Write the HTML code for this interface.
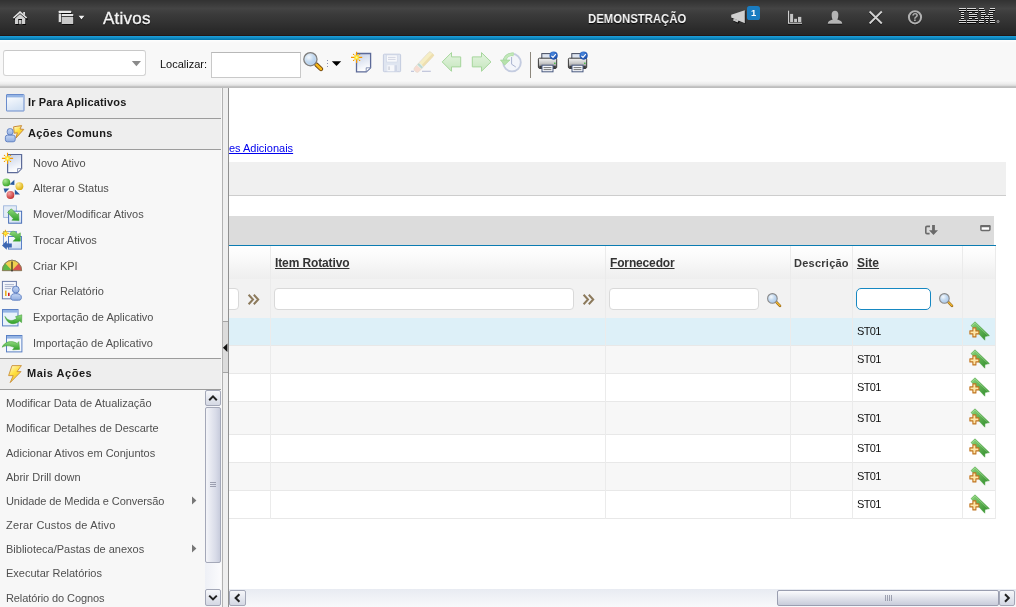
<!DOCTYPE html>
<html><head><meta charset="utf-8">
<style>
*{box-sizing:border-box}
html,body{margin:0;padding:0;width:1016px;height:607px;overflow:hidden;background:#fff;font-family:"Liberation Sans",sans-serif;position:relative}
.a{position:absolute}
svg.a{overflow:visible;will-change:transform}
.t{position:absolute;white-space:nowrap;line-height:1}
.t,.sitem,.mitem,.bh,.hh,.st{will-change:transform}
#hdr{left:0;top:0;width:1016px;height:36px;background:linear-gradient(#323232 0px,#3a3a3a 4px,#444 8.5px,#3b3b3b 14px,#333 22px,#2a2a2a 30px,#262626 35px)}
#hdrline{left:0;top:35px;width:1016px;height:1px;background:#221818}
#blue{left:0;top:36px;width:1016px;height:4px;background:linear-gradient(#1ea0da,#0e86bd 60%,#0272a6)}
#tb{left:0;top:40px;width:1016px;height:48px;background:linear-gradient(#fefefe 0px,#f8f8f8 3px,#f8f8f8 41px,#f3f3f3 42px,#ececec 44px,#dcdcdc 45.5px,#c4c4c4 46.5px,#bababa 48px)}
#side{left:0;top:88px;width:222px;height:519px;background:#f7f7f7}
.band{position:absolute;left:0;width:221px;background:#eeeeee;border-bottom:1px solid #9c9c9c}
.sitem{position:absolute;left:33px;font-size:11px;color:#505050;white-space:nowrap;line-height:1}
.mitem{position:absolute;left:6px;font-size:11px;color:#505050;white-space:nowrap;line-height:1}
.bh{position:absolute;left:28px;font-size:11px;font-weight:bold;color:#1a1a1a;white-space:nowrap;line-height:1;letter-spacing:0.15px}
#strip{left:222px;top:88px;width:7px;height:519px;background:#efefef;border-left:1px solid #b2b2b2;border-right:1px solid #909090}
#main{left:229px;top:88px;width:787px;height:519px;overflow:hidden}
#mi{position:absolute;left:-229px;top:-88px;width:1016px;height:607px}
.col{position:absolute;width:1px;background:#ebebeb}
.row{position:absolute;left:229px;width:767px}
.st{position:absolute;left:856.6px;font-size:11px;color:#111;line-height:1;letter-spacing:-0.65px;margin-top:-1px}
.fin{position:absolute;height:22px;background:#fff;border:1px solid #d9d9d9;border-radius:4px}
.hh{position:absolute;font-size:12px;font-weight:bold;color:#333;text-decoration:underline;line-height:1;white-space:nowrap}
</style></head><body>
<!-- header -->
<div id="hdr" class="a"></div>
<div id="hdrline" class="a"></div>
<div id="blue" class="a"></div>
<!-- home -->
<svg class="a" style="left:8px;top:6px" width="24" height="24" viewBox="0 0 24 24">
 <g transform="translate(0.6,0.7)" fill="#000" opacity="0.9">
  <path d="M5 12.2 L12 5.6 L19.2 12.2 L19.2 13 L17.6 13 L12 8 L6.6 13 L5 13Z"/>
  <path d="M7 13 L12 8.6 L17.3 13 V18.2 H14 V13.6 H10.2 V18.2 H7Z"/>
 </g>
 <path d="M15.2 6 H17 V9.4 L15.2 7.8Z" fill="#d8d8d8"/>
 <path d="M4.9 11.6 L12 5 L19.2 11.6 L18.1 12.6 L12 7.2 L6 12.6Z" fill="#e4e4e4"/>
 <path d="M7 12.4 L12 8 L17.3 12.4 V17.9 H14 V13 H10.2 V17.9 H7Z" fill="#cfcfcf"/>
 <path d="M10.8 14 H13.4 V17.9 H10.8Z" fill="#c8c8c8"/>
</svg>
<!-- apps -->
<svg class="a" style="left:54px;top:6px" width="36" height="24" viewBox="0 0 36 24">
 <g fill="#000" opacity="0.85" transform="translate(0.5,0.8)">
  <rect x="4.7" y="4.7" width="12.5" height="2.4" rx="0.6"/>
  <rect x="4.7" y="7" width="2.4" height="9.3"/>
  <rect x="7.7" y="7.9" width="11.6" height="10.1" rx="0.6"/>
 </g>
 <rect x="4.7" y="4.7" width="12.5" height="2.4" rx="0.6" fill="#e8e8e8"/>
 <rect x="4.7" y="7.6" width="2.4" height="8.6" fill="#dedede"/>
 <rect x="7.7" y="7.9" width="11.6" height="2.4" rx="0.6" fill="#e6e6e6"/>
 <rect x="7.7" y="10.9" width="11.6" height="7.1" rx="0.5" fill="#c9c9c9"/>
 <path d="M24.6 9.8 H30.4 L27.5 13.6Z" fill="#000" opacity="0.8" transform="translate(0,0.6)"/>
 <path d="M24.6 9.8 H30.4 L27.5 13.4Z" fill="#f0f0f0"/>
</svg>
<div class="t" style="left:103px;top:10px;font-size:17px;color:#f4f4f4;letter-spacing:0.25px;text-shadow:0 1px 1px #000;-webkit-text-stroke:0.35px #f4f4f4">Ativos</div>
<div class="t" style="left:588px;top:12.2px;font-size:13px;font-weight:bold;color:#f6f6f6;text-shadow:0 1px 1px #000;transform:scaleX(0.872);transform-origin:0 0">DEMONSTRAÇÃO</div>
<!-- megaphone -->
<svg class="a" style="left:726px;top:2px" width="40" height="28" viewBox="0 0 40 28">
 <g transform="translate(0.6,0.8)" fill="#000" opacity="0.8">
  <path d="M5.2 12.8 L18.8 8.2 V21.3 L13.2 18.4 L11.6 21 L7 18.7 L8 16.4 L5.2 15.6Z"/>
 </g>
 <path d="M5.2 12.8 L18.8 8.2 V21.3 L5.2 15.6Z" fill="#cfcfcf"/>
 <path d="M7.8 16.4 L12.9 18.2 L11.6 20.6 L7 18.6Z" fill="#c4c4c4"/>
 <rect x="21" y="4" width="13" height="14" rx="2.6" fill="#1a7cc0"/>
 <text x="27.6" y="14" text-anchor="middle" font-family="Liberation Sans" font-weight="bold" font-size="9.4" fill="#fff">1</text>
</svg>
<!-- chart -->
<svg class="a" style="left:782px;top:4px" width="24" height="24" viewBox="0 0 24 24">
 <g fill="#000" opacity="0.8" transform="translate(0,0.8)">
  <rect x="6" y="6.7" width="1.1" height="12.3"/><rect x="6" y="18.7" width="14" height="1.2"/>
 </g>
 <rect x="6" y="6.7" width="1.1" height="12.3" fill="#cfcfcf"/>
 <rect x="6" y="18.7" width="14" height="1.1" fill="#cfcfcf"/>
 <rect x="8.1" y="9.9" width="3" height="8.2" fill="#c4c4c4"/>
 <rect x="12.1" y="14.8" width="2.9" height="3.3" fill="#c4c4c4"/>
 <rect x="16" y="12.9" width="3.3" height="5.2" fill="#c4c4c4"/>
</svg>
<!-- person -->
<svg class="a" style="left:826px;top:8px" width="18" height="18" viewBox="0 0 18 18">
 <g fill="#000" opacity="0.7" transform="translate(0,0.8)">
  <path d="M1.8 15.8 C1.8 13.2 4 12.4 6.6 11.6 C5.9 10.4 5.6 9 5.6 6.6 C5.6 4.2 7 2.7 9 2.7 C11 2.7 12.4 4.2 12.4 6.6 C12.4 9 12.1 10.4 11.4 11.6 C14 12.4 16.2 13.2 16.2 15.8Z"/>
 </g>
 <path d="M1.8 15.8 C1.8 13.2 4 12.4 6.6 11.6 C5.9 10.4 5.6 9 5.6 6.6 C5.6 4.2 7 2.7 9 2.7 C11 2.7 12.4 4.2 12.4 6.6 C12.4 9 12.1 10.4 11.4 11.6 C14 12.4 16.2 13.2 16.2 15.8Z" fill="#b4b4b4"/>
</svg>
<!-- X -->
<svg class="a" style="left:866px;top:8px" width="20" height="20" viewBox="0 0 20 20">
 <g stroke="#000" stroke-width="2" opacity="0.8" transform="translate(0,0.8)"><path d="M3.6 3.5 L15.8 15.5 M15.8 3.5 L3.6 15.5"/></g>
 <g stroke="#d2d2d2" stroke-width="1.9"><path d="M3.6 3.5 L15.8 15.5 M15.8 3.5 L3.6 15.5"/></g>
</svg>
<!-- help -->
<svg class="a" style="left:905px;top:8px" width="20" height="20" viewBox="0 0 20 20">
 <circle cx="10" cy="9.3" r="6.1" fill="none" stroke="#000" stroke-width="2" opacity="0.6" transform="translate(0,0.6)"/>
 <circle cx="10" cy="9.3" r="6.1" fill="none" stroke="#b0b0b0" stroke-width="2"/>
 <text x="10" y="13.2" text-anchor="middle" font-family="Liberation Sans" font-weight="bold" font-size="11" fill="#b0b0b0">?</text>
</svg>
<!-- IBM -->
<svg class="a" style="left:0;top:0" width="1016" height="30" viewBox="0 0 1016 30">
 <g fill="#000" opacity="0.85"><rect x="959" y="9" width="7" height="1"/><rect x="967" y="9" width="9" height="1"/><rect x="979" y="9" width="5" height="1"/><rect x="990" y="9" width="5" height="1"/><rect x="959" y="11" width="7" height="1"/><rect x="967" y="11" width="11" height="1"/><rect x="979" y="11" width="6" height="1"/><rect x="989" y="11" width="6" height="1"/><rect x="961" y="13" width="3" height="1"/><rect x="969" y="13" width="3" height="1"/><rect x="975" y="13" width="3" height="1"/><rect x="981" y="13" width="4" height="1"/><rect x="989" y="13" width="4" height="1"/><rect x="961" y="15" width="3" height="1"/><rect x="969" y="15" width="8" height="1"/><rect x="981" y="15" width="5" height="1"/><rect x="988" y="15" width="5" height="1"/><rect x="961" y="17" width="3" height="1"/><rect x="969" y="17" width="8" height="1"/><rect x="981" y="17" width="3" height="1"/><rect x="985" y="17" width="4" height="1"/><rect x="990" y="17" width="3" height="1"/><rect x="961" y="19" width="3" height="1"/><rect x="969" y="19" width="3" height="1"/><rect x="975" y="19" width="3" height="1"/><rect x="981" y="19" width="3" height="1"/><rect x="985" y="19" width="4" height="1"/><rect x="990" y="19" width="3" height="1"/><rect x="959" y="21" width="7" height="1"/><rect x="967" y="21" width="11" height="1"/><rect x="979" y="21" width="5" height="1"/><rect x="986" y="21" width="2" height="1"/><rect x="990" y="21" width="5" height="1"/><rect x="959" y="23" width="7" height="1"/><rect x="967" y="23" width="9" height="1"/><rect x="979" y="23" width="5" height="1"/><rect x="986" y="23" width="2" height="1"/><rect x="990" y="23" width="5" height="1"/></g>
 <g fill="#d8d8d8"><rect x="959" y="8" width="7" height="1"/><rect x="967" y="8" width="9" height="1"/><rect x="979" y="8" width="5" height="1"/><rect x="990" y="8" width="5" height="1"/><rect x="959" y="10" width="7" height="1"/><rect x="967" y="10" width="11" height="1"/><rect x="979" y="10" width="6" height="1"/><rect x="989" y="10" width="6" height="1"/><rect x="961" y="12" width="3" height="1"/><rect x="969" y="12" width="3" height="1"/><rect x="975" y="12" width="3" height="1"/><rect x="981" y="12" width="4" height="1"/><rect x="989" y="12" width="4" height="1"/><rect x="961" y="14" width="3" height="1"/><rect x="969" y="14" width="8" height="1"/><rect x="981" y="14" width="5" height="1"/><rect x="988" y="14" width="5" height="1"/><rect x="961" y="16" width="3" height="1"/><rect x="969" y="16" width="8" height="1"/><rect x="981" y="16" width="3" height="1"/><rect x="985" y="16" width="4" height="1"/><rect x="990" y="16" width="3" height="1"/><rect x="961" y="18" width="3" height="1"/><rect x="969" y="18" width="3" height="1"/><rect x="975" y="18" width="3" height="1"/><rect x="981" y="18" width="3" height="1"/><rect x="985" y="18" width="4" height="1"/><rect x="990" y="18" width="3" height="1"/><rect x="959" y="20" width="7" height="1"/><rect x="967" y="20" width="11" height="1"/><rect x="979" y="20" width="5" height="1"/><rect x="986" y="20" width="2" height="1"/><rect x="990" y="20" width="5" height="1"/><rect x="959" y="22" width="7" height="1"/><rect x="967" y="22" width="9" height="1"/><rect x="979" y="22" width="5" height="1"/><rect x="986" y="22" width="2" height="1"/><rect x="990" y="22" width="5" height="1"/></g>
 <circle cx="998" cy="21.5" r="1" fill="none" stroke="#c8c8c8" stroke-width="0.7"/>
</svg>
<!-- toolbar -->
<div id="tb" class="a"></div>
<div class="a" style="left:3px;top:50px;width:143px;height:26px;background:#fff;border:1px solid #d4d4d4;border-top-color:#c8c8c8;border-radius:3px"></div>
<svg class="a" style="left:128px;top:58px" width="16" height="12" viewBox="0 0 16 12"><path d="M3.8 3 H13 L8.4 8.3Z" fill="#8a8a8a"/></svg>
<div class="t" style="left:160px;top:59px;font-size:11px;color:#111">Localizar:</div>
<div class="a" style="left:211px;top:52px;width:90px;height:26px;background:#fff;border:1px solid #c9c9c9;border-top-color:#b8b8b8"></div>
<!-- magnifier -->
<svg class="a" style="left:300px;top:48px" width="46" height="28" viewBox="0 0 46 28">
 <defs>
  <radialGradient id="lens" cx="0.38" cy="0.35" r="0.7"><stop offset="0" stop-color="#f4f8fc"/><stop offset="0.5" stop-color="#c4daf0"/><stop offset="1" stop-color="#a8c8ec"/></radialGradient>
 </defs>
 <path d="M16.4 16.6 L21 21" stroke="#6a4010" stroke-width="4.4" stroke-linecap="round"/>
 <path d="M16.4 16.6 L21 21" stroke="#f6b818" stroke-width="2.6" stroke-linecap="round"/>
 <circle cx="10.4" cy="11.2" r="6.5" fill="url(#lens)" stroke="#7e7e7e" stroke-width="1.5"/>
 <circle cx="10.4" cy="11.2" r="5.6" fill="none" stroke="#e8f0f8" stroke-width="0.6" opacity="0.7"/>
 <g fill="#8c90b0"><rect x="27" y="12" width="1" height="1"/><rect x="27" y="15" width="1" height="1"/><rect x="27" y="18" width="1" height="1"/></g>
 <path d="M31.8 13.2 H41.2 L36.5 18Z" fill="#000"/>
</svg>
<!-- new doc -->
<svg class="a" style="left:346px;top:48px" width="30" height="28" viewBox="0 0 30 28">
 <defs><linearGradient id="docg" x1="0" y1="0" x2="0.3" y2="1"><stop offset="0" stop-color="#c4cfe6"/><stop offset="1" stop-color="#ffffff"/></linearGradient></defs>
 <path d="M10.5 5.5 H24.6 V19.8 L20.2 23.9 H10.5Z" fill="url(#docg)" stroke="#5c6a98" stroke-width="1.3"/>
  <path d="M20.2 23.9 V19.8 H24.6Z" fill="#fff" stroke="#6b78a4" stroke-width="0.8" stroke-linejoin="round"/>
 <g transform="translate(10.6,9.4)">
  <path d="M0 -5.6 V5.6 M-5.6 0 H5.6" stroke="#f59800" stroke-width="1.2"/>
  <path d="M-2.2 -2.2 L2.2 2.2 M2.2 -2.2 L-2.2 2.2" stroke="#ffd820" stroke-width="1.6" opacity="0.85"/>
  <path d="M-2.2 0 H2.2 M0 -2.2 V2.2" stroke="#ffe830" stroke-width="2"/>
  <circle cx="-3" cy="-3" r="0.7" fill="#f5a000"/><circle cx="3" cy="-3" r="0.7" fill="#f5a000"/>
  <circle cx="-3" cy="3" r="0.7" fill="#f5a000"/><circle cx="3" cy="3" r="0.7" fill="#f5a000"/>
  <circle cx="0" cy="0" r="1" fill="#fff8a0"/>
 </g>
</svg>
<!-- save (disabled) -->
<svg class="a" style="left:380px;top:50px" width="24" height="24" viewBox="0 0 24 24">
 <rect x="3.4" y="4.2" width="17.2" height="17.5" rx="0.8" fill="#dfe5f0" stroke="#c4ccdf" stroke-width="1"/>
 <rect x="6.6" y="5" width="10.6" height="7" fill="#f8f9fb" stroke="#d0d6e6" stroke-width="0.6"/>
 <path d="M8 7.4 H15.6 M8 9.4 H15.6" stroke="#c8cddc" stroke-width="0.8"/>
 <rect x="6.4" y="14.8" width="11" height="6.4" fill="#e4e8f2"/>
 <rect x="7.4" y="15.2" width="6.6" height="6" fill="#f6f7fa"/>
 <rect x="8.4" y="16.4" width="1.3" height="3.6" fill="#c8ccd8"/>
 <rect x="14.8" y="15.2" width="2.2" height="6" fill="#cfd6e6"/>
</svg>
<!-- eraser (disabled) -->
<svg class="a" style="left:406px;top:48px" width="30" height="28" viewBox="0 0 30 28">
 <g transform="translate(17.6,14.2) rotate(-47)">
  <rect x="-12.4" y="-3" width="24.8" height="6" rx="2.6" fill="#f7dcd2"/>
  <rect x="-6.8" y="-3" width="19.2" height="6" fill="#e6f0ec"/>
  <rect x="-3.2" y="-3" width="15.6" height="6" fill="#f6eec4"/>
  <rect x="-6" y="-3" width="2" height="6" fill="#bcd8d2"/>
  <rect x="-12.4" y="-3" width="24.8" height="6" rx="2.6" fill="none" stroke="#e4ddd0" stroke-width="0.7"/>
  <rect x="-3.2" y="0.6" width="15.6" height="2.4" fill="#eedfb0"/>
 </g>
 <rect x="5" y="22.7" width="3" height="1.3" fill="#c4c8dc"/>
 <rect x="16" y="22.7" width="8.8" height="1.3" fill="#c4c8dc"/>
</svg>
<!-- left arrow -->
<svg class="a" style="left:436px;top:48px" width="30" height="28" viewBox="0 0 30 28">
 <defs><linearGradient id="arg" x1="0" y1="0" x2="0" y2="1"><stop offset="0" stop-color="#e4f4e0"/><stop offset="1" stop-color="#c6e6be"/></linearGradient></defs>
 <path d="M6.2 13.9 L15.5 4.6 V8.9 H24.7 V18.9 H15.5 V23.3Z" fill="url(#arg)" stroke="#a6d69c" stroke-width="1" stroke-linejoin="round"/>
</svg>
<!-- right arrow -->
<svg class="a" style="left:466px;top:48px" width="30" height="28" viewBox="0 0 30 28">
 <path d="M25 13.9 L15.5 4.6 V8.9 H6.3 V18.9 H15.5 V23.3Z" fill="url(#arg)" stroke="#a6d69c" stroke-width="1" stroke-linejoin="round"/>
</svg>
<!-- clock -->
<svg class="a" style="left:496px;top:48px" width="30" height="28" viewBox="0 0 30 28">
 <circle cx="16" cy="14.6" r="8.8" fill="#f3f5fa" stroke="#c4cce0" stroke-width="1.9"/>
 <path d="M15.6 9 V16.2 L19.8 19" fill="none" stroke="#aab4d0" stroke-width="1"/>
 <path d="M17.6 6.4 A8.2 8.2 0 0 0 8.6 12" stroke="#a6d89c" stroke-width="3.6" fill="none"/>
 <path d="M17.6 6.4 A8.2 8.2 0 0 0 8.6 12" stroke="#c2e8ba" stroke-width="2.2" fill="none"/>
 <path d="M4.4 12 H14 L8.6 17.2Z" fill="#b6e2ac" stroke="#9ed494" stroke-width="0.6" stroke-linejoin="round"/>
</svg>
<div class="a" style="left:530px;top:52px;width:1px;height:26px;background:#8c877c"></div>
<svg class="a" style="left:536px;top:49px" width="28" height="26" viewBox="0 0 28 26">
 <defs>
  <linearGradient id="prb" x1="0" y1="0" x2="0" y2="1"><stop offset="0" stop-color="#f4f4f4"/><stop offset="0.5" stop-color="#c8c8c8"/><stop offset="1" stop-color="#7a7a7a"/></linearGradient>
  <radialGradient id="chk" cx="0.4" cy="0.3" r="0.8"><stop offset="0" stop-color="#4a8ae0"/><stop offset="1" stop-color="#1040a0"/></radialGradient>
 </defs>
 <g id="printer">
 <rect x="5.8" y="4.6" width="11.6" height="6" fill="#dde4f0" stroke="#444c60" stroke-width="1"/>
 <rect x="2.4" y="9.2" width="18.3" height="10" rx="1" fill="url(#prb)" stroke="#3a3a3a" stroke-width="1"/>
 <rect x="3.4" y="16.8" width="16.4" height="3.2" fill="#3c3c3c"/>
 <rect x="6" y="16.2" width="11" height="6.6" fill="#f4f6fa" stroke="#4a5a80" stroke-width="1"/>
 <path d="M7.6 18.6 H15.4 M7.6 20.6 H15.4" stroke="#555" stroke-width="0.8"/>
 <rect x="18.2" y="13.6" width="1.3" height="1.3" fill="#20c020"/>
 <circle cx="17.6" cy="6.6" r="4.1" fill="url(#chk)"/>
 <path d="M15.4 6.8 L17 8.4 L19.8 5.2" fill="none" stroke="#fff" stroke-width="1.1"/>
 </g>
</svg>
<svg class="a" style="left:566px;top:49px" width="28" height="26" viewBox="0 0 28 26"><use href="#printer"/></svg>
<!-- sidebar -->
<div id="side" class="a"></div>
<div class="band" style="top:88px;height:31px"></div>
<div class="band" style="top:119px;height:31px"></div>
<div class="band" style="top:359px;height:31px"></div>
<div class="a" style="left:0;top:358px;width:221px;height:1px;background:#9c9c9c"></div>
<div class="bh" style="top:97px">Ir Para Aplicativos</div>
<div class="bh" style="top:128px;letter-spacing:0.4px">Ações Comuns</div>
<div class="bh" style="top:368px;left:27px;letter-spacing:0.5px">Mais Ações</div>
<svg class="a" style="left:0;top:88px" width="30" height="62" viewBox="0 0 30 62">
 <defs>
  <linearGradient id="wg" x1="0" y1="0" x2="0.4" y2="1"><stop offset="0" stop-color="#ffffff"/><stop offset="1" stop-color="#d4e2f4"/></linearGradient>
  <linearGradient id="ltg" x1="0" y1="0" x2="0.6" y2="1"><stop offset="0" stop-color="#fffce0"/><stop offset="0.5" stop-color="#ffe040"/><stop offset="1" stop-color="#f0c020"/></linearGradient>
  <linearGradient id="pbg2" x1="0" y1="0" x2="0" y2="1"><stop offset="0" stop-color="#c4d6f4"/><stop offset="1" stop-color="#90acdf"/></linearGradient>
  <linearGradient id="pbg" x1="0" y1="0" x2="0" y2="1"><stop offset="0" stop-color="#a8c4ec"/><stop offset="1" stop-color="#6890d0"/></linearGradient>
 </defs>
 <rect x="6.5" y="6.5" width="17.5" height="16.5" rx="0.3" fill="url(#wg)" stroke="#6a8ccc" stroke-width="1"/>
 <rect x="7" y="7" width="16.5" height="2.4" fill="#94b4e4"/>
 <path d="M13.6 38.8 L21.6 37.6 L20 41 L23.8 41.4 L15.8 50.2 L17.4 44.8 L14.2 45.2 Z" fill="url(#ltg)" stroke="#c88a3a" stroke-width="1" stroke-linejoin="round"/>
 <rect x="7.2" y="40.6" width="5.8" height="6.4" rx="2.6" fill="url(#pbg2)" stroke="#5a7cc0" stroke-width="0.9"/>
 <rect x="5.4" y="47.2" width="9.8" height="6.6" rx="2" fill="url(#pbg2)" stroke="#5a7cc0" stroke-width="0.9"/>
</svg>
<svg class="a" style="left:0;top:150px" width="30" height="208" viewBox="0 150 30 208">
 <defs>
  <radialGradient id="gball" cx="0.35" cy="0.3" r="0.8"><stop offset="0" stop-color="#a8e890"/><stop offset="1" stop-color="#30a020"/></radialGradient>
  <radialGradient id="yball" cx="0.35" cy="0.3" r="0.8"><stop offset="0" stop-color="#fff0a0"/><stop offset="1" stop-color="#d8a800"/></radialGradient>
  <radialGradient id="rball" cx="0.35" cy="0.3" r="0.8"><stop offset="0" stop-color="#f4a0a0"/><stop offset="1" stop-color="#c02828"/></radialGradient>
  <linearGradient id="grg" x1="0" y1="0" x2="0" y2="1"><stop offset="0" stop-color="#90d880"/><stop offset="1" stop-color="#30a028"/></linearGradient>
 </defs>
 <!-- novo -->
 <path d="M7.6 154.5 H21.6 V168.6 L17.6 172.6 H7.6Z" fill="url(#docg)" stroke="#5c6a98" stroke-width="1.2"/>
 <path d="M17.6 172.6 V168.6 H21.6Z" fill="#fff" stroke="#6b78a4" stroke-width="0.8" stroke-linejoin="round"/>
 <g transform="translate(7.5,158.4)">
  <path d="M0 -5.6 V5.6 M-5.6 0 H5.6" stroke="#f59800" stroke-width="1.1"/>
  <path d="M-2.2 -2.2 L2.2 2.2 M2.2 -2.2 L-2.2 2.2" stroke="#ffd820" stroke-width="1.6" opacity="0.85"/>
  <path d="M-2.2 0 H2.2 M0 -2.2 V2.2" stroke="#ffe830" stroke-width="2"/>
  <circle cx="-3" cy="-3" r="0.7" fill="#f5a000"/><circle cx="3" cy="-3" r="0.7" fill="#f5a000"/>
  <circle cx="-3" cy="3" r="0.7" fill="#f5a000"/><circle cx="3" cy="3" r="0.7" fill="#f5a000"/>
  <circle cx="0" cy="0" r="1" fill="#fff8a0"/>
 </g>
 <!-- status -->
 <path d="M9.4 184.4 L14.4 179.8 L14.4 185Z" fill="#2a5aa0"/>
 <path d="M3.6 188.6 L9.4 188.6 L5 193Z" fill="#2a5aa0"/>
 <path d="M14.8 189.6 L20 194.4 L14.8 194.4Z" fill="#2a5aa0"/>
 <circle cx="6.3" cy="182.4" r="3.9" fill="url(#gball)"/>
 <circle cx="19.4" cy="186.2" r="3.9" fill="url(#yball)"/>
 <circle cx="10.4" cy="195" r="3.9" fill="url(#rball)"/>
 <!-- mover -->
 <rect x="3.6" y="205.8" width="12.8" height="11.6" fill="#e4ecf6" stroke="#9cb4dc" stroke-width="0.9"/>
 <rect x="8.6" y="211.2" width="13" height="12" fill="url(#wg)" stroke="#4a70b8" stroke-width="1"/>
 <path d="M9.2 210.6 L11.4 208.8 L17.4 214.8 L18.6 213.2 L19 220.6 L11.8 220.2 L13.4 218.8 L7.6 212.6Z" fill="url(#grg)" stroke="#3a9a30" stroke-width="0.5"/>
 <!-- trocar -->
 <rect x="3.5" y="231.5" width="13" height="12.5" fill="none" stroke="#7a9ad8" stroke-width="0.9"/>
 <rect x="8.5" y="236.5" width="13" height="12.6" fill="url(#wg)" stroke="#5a80c8" stroke-width="1"/>
 <path d="M9.6 234.4 C10.6 231.2 13.6 230.4 15.8 232.2 L17.8 234.2 L20.4 232.8 L20.4 241.2 L13 241.2 L15.6 238.6 L13.8 236.6 C12.6 235.4 11 235.4 9.6 234.4Z" fill="url(#grg)" stroke="#3a9a30" stroke-width="0.4"/>
 <path d="M2 245.4 L6.8 240.6 V243.4 H11.8 V247.4 H6.8 V249.8 Z" fill="#3c66b2"/>
 <g stroke="#f5a000" stroke-width="1"><path d="M5.4 229.8 V236.8 M1.9 233.3 H8.9"/></g>
 <g stroke="#ffd000" stroke-width="1.1"><path d="M3.4 231.3 L7.4 235.3 M7.4 231.3 L3.4 235.3"/></g>
 <circle cx="5.4" cy="233.3" r="1.2" fill="#ffec40"/>
 <!-- kpi -->
 <path d="M2.4 270.6 A9.6 10.4 0 0 1 21.6 270.6Z" fill="#f0d050" stroke="#8a7a5a" stroke-width="0.8"/>
 <path d="M2.4 270.6 A9.6 10.4 0 0 1 5.2 263.2 L12 270.6Z" fill="#60b848"/>
 <path d="M21.6 270.6 A9.6 10.4 0 0 0 18.8 263.2 L12 270.6Z" fill="#d85050"/>
 <path d="M2.4 270.6 A9.6 10.4 0 0 1 21.6 270.6Z" fill="none" stroke="#8a7a5a" stroke-width="0.8"/>
 <path d="M12 261.4 V271.4" stroke="#111" stroke-width="1.05"/>
 <!-- relatorio -->
 <rect x="2.4" y="281.4" width="14" height="17.4" fill="#f4f6fb" stroke="#6a7aa8" stroke-width="1"/>
 <path d="M4.8 284.6 H14 M4.8 286.6 H14 M4.8 288.6 H11" stroke="#8a96b8" stroke-width="0.7"/>
 <rect x="5" y="290.6" width="1.6" height="5.4" fill="#e8b020"/>
 <rect x="8" y="292.8" width="1.6" height="3.2" fill="#d02020"/>
 <circle cx="15.8" cy="289.6" r="3.4" fill="url(#pbg2)" stroke="#5a7cc0" stroke-width="0.9"/>
 <path d="M10.8 297.4 C10.8 294.6 12.6 293.6 15.8 293.6 C19 293.6 21.4 294.6 21.4 297.4 C21.4 299.4 20.4 300.2 18.6 300.2 H13.6 C11.8 300.2 10.8 299.4 10.8 297.4Z" fill="url(#pbg2)" stroke="#5a7cc0" stroke-width="0.9"/>
 <!-- export -->
 <rect x="2.5" y="309.5" width="15.5" height="16.4" fill="#e8f2fa" stroke="#5a80c4" stroke-width="1"/>
 <rect x="3" y="310" width="14.5" height="2.6" fill="#94b4e4"/>
 <path d="M5 316.4 C8 321.6 13 321.2 16.6 318.6 L15.6 316.6 L21.8 314.8 L21.6 322.6 L19.6 321 C14 326 6.8 323.8 5 316.4Z" fill="url(#grg)" stroke="#3a9a30" stroke-width="0.5"/>
 <!-- import -->
 <rect x="6.5" y="335.5" width="15.4" height="16.4" fill="#f4f8fc" stroke="#5a80c4" stroke-width="1"/>
 <rect x="7" y="336" width="14.4" height="2.6" fill="#94b4e4"/>
 <path d="M2.2 347.2 C4.4 341.6 11.6 340 17.2 343.4 L18.8 341.6 L19.6 349.4 L12.6 349.8 L14.4 347.6 C10 345.2 5.4 345.4 2.2 347.2Z" fill="url(#grg)" stroke="#3a9a30" stroke-width="0.5"/>
</svg>

<div class="sitem" style="top:158px">Novo Ativo</div>
<div class="sitem" style="top:183px">Alterar o Status</div>
<div class="sitem" style="top:209px">Mover/Modificar Ativos</div>
<div class="sitem" style="top:235px">Trocar Ativos</div>
<div class="sitem" style="top:261px">Criar KPI</div>
<div class="sitem" style="top:286px">Criar Relatório</div>
<div class="sitem" style="top:312px">Exportação de Aplicativo</div>
<div class="sitem" style="top:338px">Importação de Aplicativo</div>
<!-- lightning mais acoes -->
<svg class="a" style="left:0;top:360px" width="30" height="30" viewBox="0 0 30 30">
 <path d="M12 5.6 H21.4 L17 11.6 H21 L10.2 22.6 L13.2 15.6 H8.6Z" fill="url(#ltg)" stroke="#c8903a" stroke-width="0.9" stroke-linejoin="round"/>
</svg>

<div class="mitem" style="top:398px">Modificar Data de Atualização</div>
<div class="mitem" style="top:423px;letter-spacing:-0.03px">Modificar Detalhes de Descarte</div>
<div class="mitem" style="top:448px">Adicionar Ativos em Conjuntos</div>
<div class="mitem" style="top:472px">Abrir Drill down</div>
<div class="mitem" style="top:496px;letter-spacing:-0.09px">Unidade de Medida e Conversão</div>
<div class="mitem" style="top:520px;letter-spacing:0.18px">Zerar Custos de Ativo</div>
<div class="mitem" style="top:544px">Biblioteca/Pastas de anexos</div>
<div class="mitem" style="top:568px">Executar Relatórios</div>
<div class="mitem" style="top:593px;letter-spacing:-0.1px">Relatório do Cognos</div>
<svg class="a" style="left:190px;top:494px" width="10" height="64" viewBox="0 0 10 64">
 <path d="M2 2.5 L6.4 6.4 L2 10.4Z" fill="#777"/>
 <path d="M2 50.5 L6.4 54.4 L2 58.4Z" fill="#777"/>
</svg>
<!-- sidebar scrollbar -->
<div class="a" style="left:205px;top:390px;width:16px;height:216px;background:linear-gradient(90deg,#eef0f6,#fbfbfd)"></div>
<div class="a" style="left:205px;top:390px;width:16px;height:16px;border:1px solid #a4a8b8;border-radius:2px;background:linear-gradient(#f6f7fa,#d4d8e4)"></div>
<svg class="a" style="left:205px;top:390px" width="16" height="16" viewBox="0 0 16 16"><path d="M4.2 10.2 L8 6.4 L11.8 10.2" fill="none" stroke="#222" stroke-width="2"/></svg>
<div class="a" style="left:205px;top:407px;width:16px;height:156px;border:1px solid #a4a8b8;border-radius:2px;background:linear-gradient(90deg,#f4f5f9,#d8dbe8 70%,#c8ccdc)"></div>
<svg class="a" style="left:205px;top:480px" width="16" height="10" viewBox="0 0 16 10"><path d="M5 2.5 H11 M5 4.5 H11 M5 6.5 H11" stroke="#8a8ea0" stroke-width="0.8"/></svg>
<div class="a" style="left:205px;top:589px;width:16px;height:17px;border:1px solid #a4a8b8;border-radius:2px;background:linear-gradient(#f6f7fa,#d4d8e4)"></div>
<svg class="a" style="left:205px;top:589px" width="16" height="17" viewBox="0 0 16 17"><path d="M4.2 6.6 L8 10.4 L11.8 6.6" fill="none" stroke="#222" stroke-width="2"/></svg>
<!-- strip -->
<div id="strip" class="a"></div>
<div class="a" style="left:223px;top:321px;width:5px;height:52px;background:#dcdcdc;border-top:1px solid #a4a4a4;border-bottom:1px solid #a4a4a4"></div>
<svg class="a" style="left:222px;top:341px" width="7" height="14" viewBox="0 0 7 14"><path d="M5.4 2.6 L0.9 6.8 L5.4 11Z" fill="#111"/></svg>
<!-- main -->
<div id="main" class="a"><div id="mi">
<div class="t" style="left:180px;top:143px;width:113px;height:12px;overflow:visible"><span class="t" style="right:0;top:0;font-size:11px;color:#0000ee;text-decoration:underline">Informações Adicionais</span></div>
<div class="a" style="left:229px;top:162px;width:777px;height:34px;background:#f0f0f0;border-bottom:1px solid #cdcdcd"></div>
<div class="a" style="left:229px;top:216px;width:765px;height:29px;background:#dcdcdc"></div>
<svg class="a" style="left:916px;top:216px" width="80" height="29" viewBox="0 0 80 29">
 <path d="M14 10.4 H11 Q9.8 10.4 9.8 11.6 V16.4 Q9.8 17.6 11 17.6 H13.6" fill="none" stroke="#6a6a6a" stroke-width="1.6"/>
 <path d="M16.1 9 H18.9 V14.2 H22 L17.5 18.9 L13 14.2 H16.1Z" fill="#6a6a6a"/>
 <rect x="64.9" y="9.7" width="9" height="4.8" rx="1" fill="#fff" stroke="#6a6a6a" stroke-width="1.5"/>
 <rect x="64.3" y="9.1" width="10.2" height="2.2" rx="0.8" fill="#6a6a6a"/>
</svg>
<div class="a" style="left:229px;top:245px;width:767px;height:1px;background:#0b7cb2"></div>
<div class="a" style="left:229px;top:246px;width:767px;height:33px;background:linear-gradient(#ffffff,#fafafa 35%,#eeeeee)"></div>
<div class="a" style="left:229px;top:279px;width:767px;height:39px;background:#f2f2f2"></div>
<div class="row" style="top:318px;height:27px;background:#ddf0f8"></div>
<div class="row" style="top:345px;height:28px;background:#f7f7f7;border-top:1px solid #e8e8e8"></div>
<div class="row" style="top:373px;height:28px;background:#fff;border-top:1px solid #e8e8e8"></div>
<div class="row" style="top:401px;height:33px;background:#f7f7f7;border-top:1px solid #e8e8e8"></div>
<div class="row" style="top:434px;height:28px;background:#fff;border-top:1px solid #e8e8e8"></div>
<div class="row" style="top:462px;height:28px;background:#f7f7f7;border-top:1px solid #e8e8e8"></div>
<div class="row" style="top:490px;height:29px;background:#fff;border-top:1px solid #e8e8e8;border-bottom:1px solid #e8e8e8"></div>
<div class="col" style="left:270px;top:246px;height:273px"></div>
<div class="col" style="left:605px;top:246px;height:273px"></div>
<div class="col" style="left:790px;top:246px;height:273px"></div>
<div class="col" style="left:852px;top:246px;height:273px"></div>
<div class="col" style="left:962px;top:246px;height:273px"></div>
<div class="col" style="left:995px;top:246px;height:273px"></div>

<div class="hh" style="left:274.6px;top:257px;letter-spacing:-0.12px">Item Rotativo</div>
<div class="hh" style="left:609.8px;top:257px;letter-spacing:-0.15px">Fornecedor</div>
<div class="hh" style="left:794px;top:258px;font-size:11px;text-decoration:none;letter-spacing:0.25px;color:#3a3a3a">Descrição</div>
<div class="hh" style="left:857px;top:257px">Site</div>

<div class="fin" style="left:190px;top:288px;width:49px"></div>
<div class="fin" style="left:274px;top:288px;width:300px"></div>
<div class="fin" style="left:609px;top:288px;width:150px"></div>
<div class="fin" style="left:856px;top:288px;width:75px;border:1.4px solid #1688c2;border-radius:5px"></div>
<svg class="a" style="left:244px;top:290px" width="20" height="18" viewBox="0 0 20 18"><path d="M4.6 4.8 L9 9.5 L4.6 14.2 M9.8 4.8 L14.2 9.5 L9.8 14.2" fill="none" stroke="#8c7a5c" stroke-width="2"/></svg>
<svg class="a" style="left:579px;top:290px" width="20" height="18" viewBox="0 0 20 18"><path d="M4.6 4.8 L9 9.5 L4.6 14.2 M9.8 4.8 L14.2 9.5 L9.8 14.2" fill="none" stroke="#8c7a5c" stroke-width="2"/></svg>
<svg class="a" style="left:764px;top:290px" width="20" height="20" viewBox="0 0 20 20" id="mag2">
 <path d="M11.6 11.4 L16 15.8" stroke="#8a5a10" stroke-width="2.6" stroke-linecap="round"/>
 <path d="M11.6 11.4 L16 15.8" stroke="#f0b830" stroke-width="1.4" stroke-linecap="round"/>
 <circle cx="8.4" cy="8.4" r="4.8" fill="url(#lens)" stroke="#8a8a8a" stroke-width="1.1"/>
</svg>
<svg class="a" style="left:936px;top:290px" width="20" height="20" viewBox="0 0 20 20">
 <path d="M11.6 11.4 L16 15.8" stroke="#8a5a10" stroke-width="2.6" stroke-linecap="round"/>
 <path d="M11.6 11.4 L16 15.8" stroke="#f0b830" stroke-width="1.4" stroke-linecap="round"/>
 <circle cx="8.4" cy="8.4" r="4.8" fill="url(#lens)" stroke="#8a8a8a" stroke-width="1.1"/>
</svg>

<div class="st" style="top:327px">ST01</div>
<div class="st" style="top:355px">ST01</div>
<div class="st" style="top:383px">ST01</div>
<div class="st" style="top:414px">ST01</div>
<div class="st" style="top:444px">ST01</div>
<div class="st" style="top:472px">ST01</div>
<div class="st" style="top:500px">ST01</div>
<svg class="a" style="left:960px;top:316px" width="36" height="210" viewBox="0 0 36 210">
 <defs>
  <linearGradient id="rbg" x1="0" y1="0" x2="1" y2="1"><stop offset="0" stop-color="#8ad47a"/><stop offset="1" stop-color="#2e8a28"/></linearGradient>
  <g id="addi">
   <path d="M11 5.6 L15 1.8 L29.4 15.6 L25 16.6 L24.8 20.2 Z" fill="url(#rbg)" stroke="#4aa040" stroke-width="0.5" stroke-linejoin="round"/>
   <path d="M12.6 5.4 L15 3.2 L27.6 15.2" fill="none" stroke="#c8f0c0" stroke-width="0.7" stroke-dasharray="0.8 0.6"/>
   <path d="M12.9 7.9 H15.9 V10.9 H18.9 V13.9 H15.9 V16.9 H12.9 V13.9 H9.9 V10.9 H12.9Z" fill="#fde6a8" stroke="#c07420" stroke-width="1.1" stroke-linejoin="round"/>
  </g>
 </defs>
 <use href="#addi" transform="translate(0,4)"/>
 <use href="#addi" transform="translate(0,32)"/>
 <use href="#addi" transform="translate(0,60)"/>
 <use href="#addi" transform="translate(0,91)"/>
 <use href="#addi" transform="translate(0,121)"/>
 <use href="#addi" transform="translate(0,149)"/>
 <use href="#addi" transform="translate(0,177)"/>
</svg>
<!-- horizontal scrollbar -->
<div class="a" style="left:229px;top:589px;width:787px;height:18px;background:linear-gradient(#e8ebf2,#f8f9fb)"></div>
<div class="a" style="left:229px;top:590px;width:17px;height:16px;border:1px solid #a4a8b8;border-radius:2px;background:linear-gradient(#f6f7fa,#d4d8e4)"></div>
<svg class="a" style="left:229px;top:590px" width="17" height="16" viewBox="0 0 17 16"><path d="M10.4 4.2 L6.6 8 L10.4 11.8" fill="none" stroke="#222" stroke-width="2"/></svg>
<div class="a" style="left:777px;top:590px;width:222px;height:16px;border:1px solid #9a9eb0;border-radius:2px;background:linear-gradient(#fbfbfd,#e6e8ef 40%,#c8ccda)"></div>
<svg class="a" style="left:881.5px;top:590px" width="16" height="16" viewBox="0 0 16 16"><path d="M3.5 5 V11 M5.5 5 V11 M7.5 5 V11 M9.5 5 V11" stroke="#8a8ea0" stroke-width="0.8"/></svg>
<div class="a" style="left:999px;top:590px;width:16px;height:16px;border:1px solid #a4a8b8;border-radius:2px;background:linear-gradient(#f6f7fa,#d4d8e4)"></div>
<svg class="a" style="left:999px;top:590px" width="16" height="16" viewBox="0 0 16 16"><path d="M6 4.2 L9.8 8 L6 11.8" fill="none" stroke="#222" stroke-width="2"/></svg>
</div></div>
</body></html>
